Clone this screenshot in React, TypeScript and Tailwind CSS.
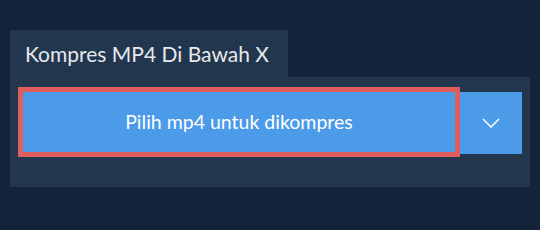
import React from "react";

const Chevron = () => (
  <svg width="18" height="10" viewBox="0 0 18 10" fill="none">
    <path d="M1 1l8 8 8-8" stroke="white" strokeWidth="1.5" />
  </svg>
);

export default function App() {
  return (
    <div
      className="w-[540px] h-[230px] bg-[#13243a] pt-[30px] pl-[10px]"
      style={{ fontFamily: "Lato, 'Noto Sans', sans-serif" }}
    >
      <div className="w-[278px] h-[47px] bg-[#22364e] pl-[15px] flex items-center text-[21px] text-[#e6e9ec]">
        Kompres MP4 Di Bawah X
      </div>
      <div className="w-[520px] h-[110px] bg-[#22364e] pt-[15px] pl-[13px] flex items-start">
        <button className="w-[432px] h-[60px] bg-[#4c9be8] outline-[5px] outline-solid outline-[#e05d5d] text-white text-[19.5px] flex items-center justify-center">
          Pilih mp4 untuk dikompres
        </button>
        <button className="ml-[5px] w-[62px] h-[62px] bg-[#4c9be8] flex items-center justify-center">
          <Chevron />
        </button>
      </div>
    </div>
  );
}
